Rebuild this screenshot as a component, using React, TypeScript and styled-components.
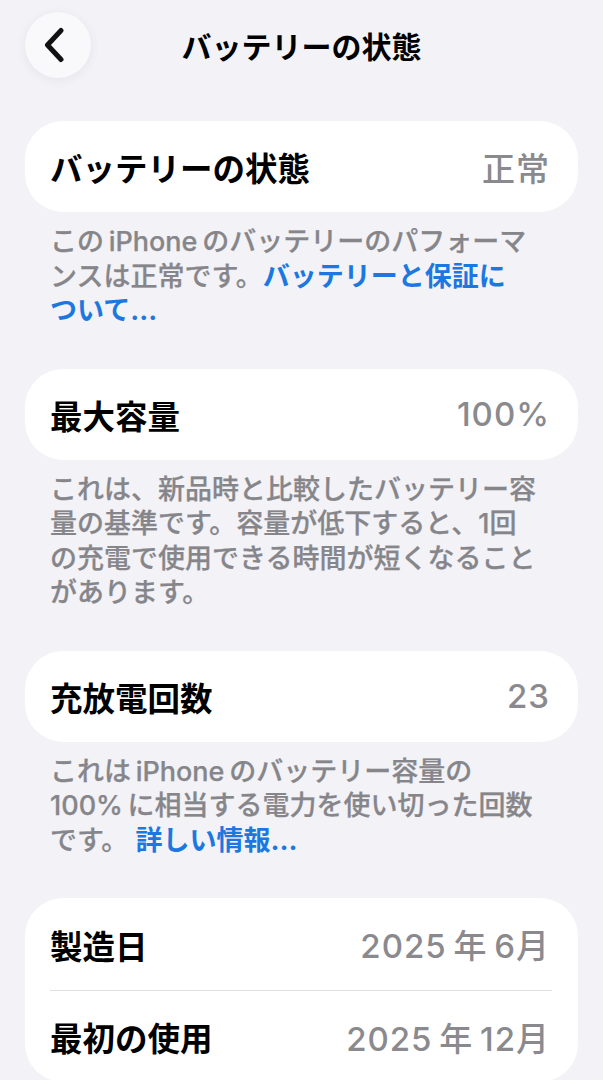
import React from "react";
import styled, { createGlobalStyle } from "styled-components";

const GlobalStyle = createGlobalStyle`
  html, body {
    margin: 0;
    padding: 0;
    background: #f2f2f7;
  }
  body {
    font-family: Inter, "Noto Sans CJK JP", "Noto Sans", sans-serif;
    -webkit-font-smoothing: antialiased;
    text-spacing-trim: space-all;
  }
`;

const Page = styled.div`
  min-height: 1080px;
  background: #f2f2f7;
  overflow: hidden;
`;

const Header = styled.header`
  display: grid;
  grid-template-columns: 66px 1fr 66px;
  align-items: start;
  height: 121px;
  box-sizing: border-box;
  padding: 12px 25px 0;
`;

const BackButton = styled.button`
  width: 66px;
  height: 66px;
  border: none;
  border-radius: 50%;
  background: #f9f9fb;
  box-shadow: 0 2px 12px rgba(0, 0, 0, 0.06);
  display: flex;
  align-items: center;
  justify-content: center;
  padding: 0 8px 0 0;
  cursor: pointer;
`;

const Title = styled.h1`
  margin: 0;
  height: 66px;
  display: flex;
  align-items: center;
  justify-content: center;
  font-size: 30px;
  font-weight: 700;
  color: #000;
`;

const Content = styled.main`
  display: flex;
  flex-direction: column;
  padding: 0 25px;
`;

const Section = styled.section`
  margin-bottom: 40px;
`;

const Card = styled.div`
  background: #ffffff;
  border-radius: 38px;
  overflow: hidden;
`;

const Row = styled.div<{ $height?: number }>`
  display: flex;
  align-items: center;
  justify-content: space-between;
  height: ${(p) => p.$height ?? 91}px;
  padding: 0 28px 0 25px;
`;

const Label = styled.span`
  font-size: 32.5px;
  font-weight: 700;
  color: #000;
`;

const Value = styled.span`
  font-size: 33px;
  font-weight: 500;
  letter-spacing: 1px;
  color: #8a8a8e;
`;

const Divider = styled.div`
  height: 1px;
  margin: 0 26px 0 25px;
  background: #e1e1e5;
`;

const Footnote = styled.p`
  margin: 0;
  padding: 13px 25px 0;
  font-size: 27px;
  font-weight: 500;
  line-height: 34.5px;
  color: #86868a;
  -webkit-text-stroke: 0.25px currentColor;
`;

const Link = styled.a`
  color: #1c78e0;
  font-weight: 700;
  text-decoration: none;
  -webkit-text-stroke: 0;
`;

const Chevron = () => (
  <svg width="22" height="36" viewBox="0 0 22 36" fill="none">
    <polyline
      points="18,3.5 4.5,18 18,32.5"
      stroke="#111"
      strokeWidth="5"
      strokeLinecap="round"
      strokeLinejoin="round"
    />
  </svg>
);

const T = "\u2009";

export default function App() {
  return (
    <Page>
      <GlobalStyle />
      <Header>
        <BackButton aria-label="戻る">
          <Chevron />
        </BackButton>
        <Title>バッテリーの状態</Title>
        <span />
      </Header>

      <Content>
        <Section>
          <Card>
            <Row>
              <Label>バッテリーの状態</Label>
              <Value>正常</Value>
            </Row>
          </Card>
          <Footnote>
            この{T}iPhone{T}のバッテリーのパフォーマ
            <br />
            ンスは正常です。<Link href="#">バッテリーと保証に
            <br />
            ついて...</Link>
          </Footnote>
        </Section>

        <Section>
          <Card>
            <Row>
              <Label>最大容量</Label>
              <Value>100%</Value>
            </Row>
          </Card>
          <Footnote>
            これは、新品時と比較したバッテリー容
            <br />
            量の基準です。容量が低下すると、1回
            <br />
            の充電で使用できる時間が短くなること
            <br />
            があります。
          </Footnote>
        </Section>

        <Section>
          <Card>
            <Row>
              <Label>充放電回数</Label>
              <Value>23</Value>
            </Row>
          </Card>
          <Footnote>
            これは{T}iPhone{T}のバッテリー容量の
            <br />
            100%{T}に相当する電力を使い切った回数
            <br />
            です。 <Link href="#">詳しい情報...</Link>
          </Footnote>
        </Section>

        <Section>
          <Card>
            <Row $height={92}>
              <Label>製造日</Label>
              <Value>2025{T}年{T}6月</Value>
            </Row>
            <Divider />
            <Row>
              <Label>最初の使用</Label>
              <Value>2025{T}年{T}12月</Value>
            </Row>
          </Card>
        </Section>
      </Content>
    </Page>
  );
}
